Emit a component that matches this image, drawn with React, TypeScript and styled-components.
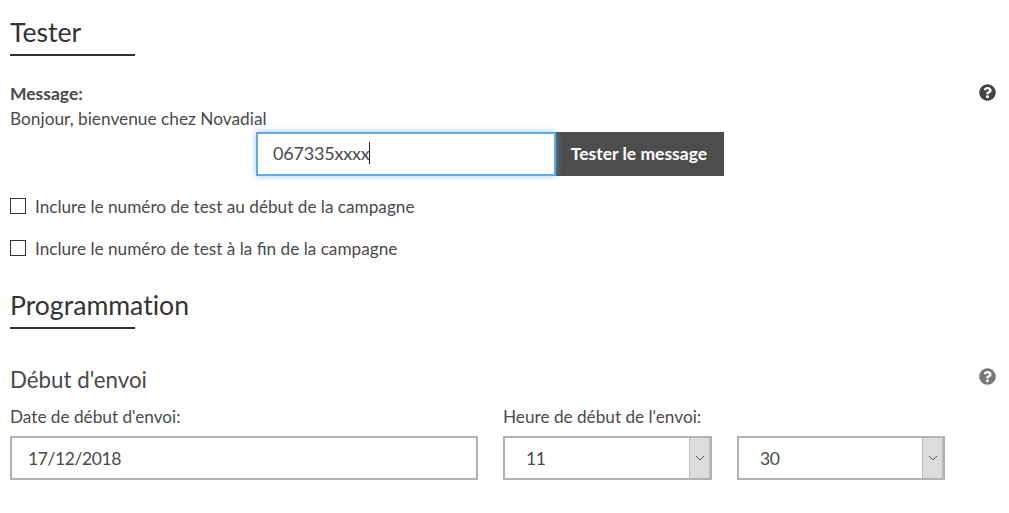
import React from 'react';
import styled, { createGlobalStyle } from 'styled-components';
import { FaQuestionCircle } from 'react-icons/fa';

const GlobalStyle = createGlobalStyle`
  html, body {
    margin: 0;
    padding: 0;
    background: #fff;
    font-family: Lato, "Open Sans", sans-serif;
    color: #4a4a4a;
  }
`;

const Page = styled.div`
  width: 1009px;
  height: 513px;
  overflow: hidden;
  box-sizing: border-box;
  padding: 14px 13px 0 10px;
`;

const SectionTitle = styled.h2<{ $mt?: number }>`
  margin: ${p => p.$mt ?? 0}px 0 0;
  width: 125px;
  height: 42px;
  box-sizing: border-box;
  border-bottom: 2px solid #333;
  font-size: 26.6px;
  line-height: 36px;
  font-weight: 400;
  font-variant-ligatures: none;
  color: #333;
  white-space: nowrap;
`;

const HelpRow = styled.div<{ $mt: number }>`
  display: flex;
  justify-content: space-between;
  align-items: flex-start;
  margin-top: ${p => p.$mt}px;
`;

const HelpIcon = styled(FaQuestionCircle)<{ $light?: boolean }>`
  width: 17px;
  height: 17px;
  margin-top: ${p => (p.$light ? 4 : 3)}px;
  color: ${p => (p.$light ? '#777' : '#444')};
`;

const StrongLabel = styled.div`
  font-size: 17.5px;
  line-height: 25px;
  font-weight: 700;
`;

const Message = styled.div`
  font-size: 17.3px;
  line-height: 25px;
`;

const TestRow = styled.div`
  display: flex;
  margin: 1px 0 0 246px;
  height: 44px;
`;

const PhoneInput = styled.div`
  display: flex;
  align-items: center;
  width: 300px;
  box-sizing: border-box;
  padding: 0 0 2px 15px;
  border: 2px solid #66a9e0;
  box-shadow: 0 0 6px rgba(102, 175, 233, 0.7);
  font-size: 18px;
  letter-spacing: -0.2px;
  position: relative;
  z-index: 1;
`;

const Caret = styled.span`
  width: 1px;
  height: 22px;
  margin-left: -1px;
  background: #222;
`;

const TestButton = styled.button`
  width: 168px;
  border: 0;
  padding: 0 2px 2px 0;
  background: #4d4d4d;
  color: #fff;
  font-family: inherit;
  font-size: 17.5px;
  font-weight: 700;
`;

const CheckRow = styled.label<{ $mt: number }>`
  display: flex;
  align-items: center;
  gap: 9px;
  margin-top: ${p => p.$mt}px;
  height: 22px;
  font-size: 17.2px;
`;

const Check = styled.span`
  width: 16px;
  height: 16px;
  box-sizing: border-box;
  border: 1px solid #333;
  background: #fff;
`;

const SubTitle = styled.h3`
  margin: 1px 0 0;
  font-size: 22.3px;
  line-height: 30px;
  font-weight: 400;
`;

const FieldGrid = styled.div`
  display: grid;
  grid-template-columns: 468px 209px 208px;
  column-gap: 25px;
  margin-top: 10px;
`;

const FieldLabel = styled.div<{ $span?: number }>`
  grid-column: span ${p => p.$span ?? 1};
  font-size: 17.2px;
  line-height: 24px;
  margin-bottom: 7px;
`;

const Field = styled.div`
  display: flex;
  align-items: center;
  height: 44px;
  box-sizing: border-box;
  border: 2px solid #b3b3b3;
  padding: 0 0 0 16px;
  font-size: 17.5px;
  letter-spacing: -0.4px;
`;

const SelectField = styled(Field)`
  padding-left: 21px;
  justify-content: space-between;
`;

const SelectArrow = styled.span`
  display: flex;
  align-items: center;
  justify-content: center;
  align-self: stretch;
  width: 21px;
  background: #dcdcdc;
  border-left: 1px solid #bdbdbd;
  border-right: 1px solid #bdbdbd;
  box-sizing: border-box;
`;

const Chevron = () => (
  <svg width="10" height="6" viewBox="0 0 10 6" fill="none">
    <path d="M1 1l4 4 4-4" stroke="#555" strokeWidth="1" />
  </svg>
);

const Select = ({ value }: { value: string }) => (
  <SelectField>
    {value}
    <SelectArrow>
      <Chevron />
    </SelectArrow>
  </SelectField>
);

export default function App() {
  return (
    <Page>
      <GlobalStyle />
      <SectionTitle>Tester</SectionTitle>
      <HelpRow $mt={25}>
        <StrongLabel>Message:</StrongLabel>
        <HelpIcon />
      </HelpRow>
      <Message>Bonjour, bienvenue chez Novadial</Message>
      <TestRow>
        <PhoneInput>
          067335xxxx
          <Caret />
        </PhoneInput>
        <TestButton>Tester le message</TestButton>
      </TestRow>
      <CheckRow $mt={19}>
        <Check />
        Inclure le numéro de test au début de la campagne
      </CheckRow>
      <CheckRow $mt={20}>
        <Check />
        Inclure le numéro de test à la fin de la campagne
      </CheckRow>
      <SectionTitle $mt={28}>Programmation</SectionTitle>
      <HelpRow $mt={35}>
        <SubTitle>Début d'envoi</SubTitle>
        <HelpIcon $light />
      </HelpRow>
      <FieldGrid>
        <FieldLabel>Date de début d'envoi:</FieldLabel>
        <FieldLabel $span={2}>Heure de début de l'envoi:</FieldLabel>
        <Field>17/12/2018</Field>
        <Select value="11" />
        <Select value="30" />
      </FieldGrid>
    </Page>
  );
}
